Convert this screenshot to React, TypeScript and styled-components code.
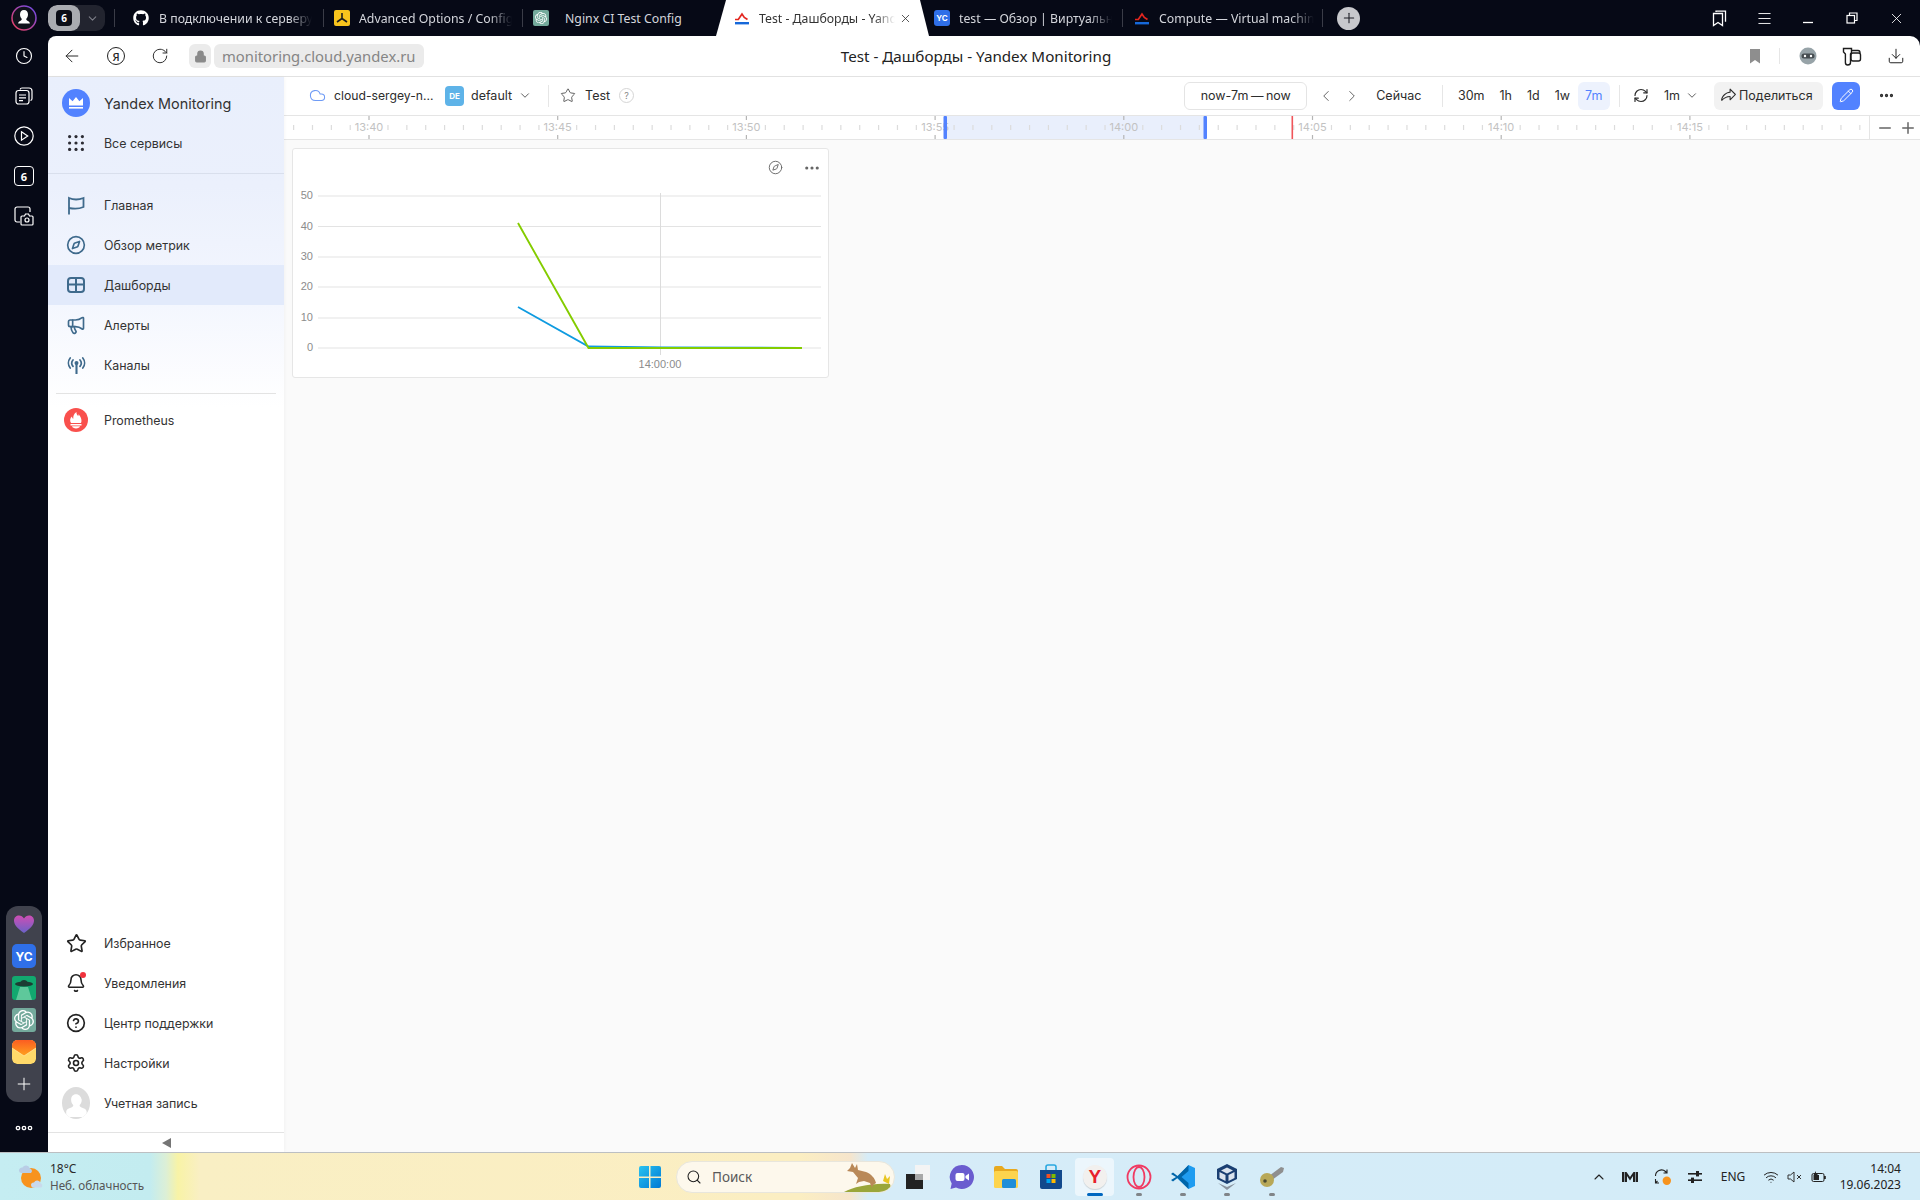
import React from "react";
import styled, { createGlobalStyle } from "styled-components";
import {
  ArrowLeft, RotateCw, Lock, ChevronDown, ChevronLeft, ChevronRight, ChevronUp, Star, Cloud, Compass, Megaphone,
  Bell, CircleHelp, Settings, MoreHorizontal, RefreshCw, Pencil, Minus, Plus, Search, Wifi, Clock, Download, X,
  Menu,
} from "lucide-react";
import { FaGithub } from "react-icons/fa";
import { SiOpenai } from "react-icons/si";
import { PiShareFat } from "react-icons/pi";

const UI = `Inter, "Noto Sans", sans-serif`;
const CHROME = `"Noto Sans", "Open Sans", sans-serif`;

const GlobalStyle = createGlobalStyle`
  html, body { margin: 0; padding: 0; background: #060916; }
  #root { width: 1920px; height: 1200px; overflow: hidden; }
  * { box-sizing: border-box; }
`;

const Page = styled.div`
  width: 1920px; height: 1200px; display: flex; flex-direction: column; background: #060916; overflow: hidden;
`;

/* ---------- browser tab strip ---------- */
const TabStrip = styled.div`
  flex: none; height: 36px; display: flex; align-items: center; color: #d4d6dc;
  font: 12.3px ${CHROME};
`;
const ProfileSlot = styled.div`
  flex: none; width: 48px; height: 36px; display: flex; align-items: center; justify-content: center;
`;
const Counter = styled.div`
  flex: none; width: 57px; height: 26px; display: flex; border-radius: 9px; background: #22242f; overflow: hidden;
`;
const CounterNum = styled.div`
  width: 32px; background: #a9abb0; border-radius: 9px; display: flex; align-items: center; justify-content: center;
`;
const CounterBadge = styled.div`
  width: 16px; height: 16px; border-radius: 4px; background: #0b0d16; color: #fff; font: 700 10px ${CHROME};
  display: flex; align-items: center; justify-content: center;
`;
const CounterArrow = styled.div`
  flex: 1; display: flex; align-items: center; justify-content: center; color: #7d7f88;
`;
const TabSep = styled.div<{ $ml?: number }>`
  flex: none; width: 1px; height: 18px; background: #3a3c47; margin-left: ${(p) => p.$ml ?? 0}px;
`;
const Tab = styled.div<{ $w: number; $pad: number; $gap: number }>`
  flex: none; width: ${(p) => p.$w}px; height: 36px; padding-left: ${(p) => p.$pad}px; display: flex; align-items: center;
  gap: ${(p) => p.$gap}px; white-space: nowrap;
`;
const ActiveTab = styled(Tab)`
  background: #fff; color: #333; clip-path: polygon(10px 0, 204px 0, 213px 100%, 0 100%);
`;
const TabText = styled.span<{ $w: number; $fade?: boolean }>`
  display: block; width: ${(p) => p.$w}px; overflow: hidden; flex: none; line-height: 18px; margin-top: 1px;
  ${(p) => (p.$fade ? "mask-image: linear-gradient(90deg, #000 85%, transparent 100%);" : "")}
`;
const TabClose = styled.span`
  display: flex; margin-left: -5px; color: #333;
`;
const NewTab = styled.div`
  flex: none; width: 23px; height: 23px; margin-left: 14px; border-radius: 50%; background: #c7c8cc; color: #1c1d25;
  display: flex; align-items: center; justify-content: center;
`;
const WindowControls = styled.div`
  margin-left: auto; padding-right: 2px; display: flex; color: #fff;
`;
const WinBtn = styled.div`
  width: 44px; height: 36px; display: flex; align-items: center; justify-content: center;
`;
const TabSquare = styled.div<{ $bg: string; $r?: number }>`
  width: 16px; height: 16px; flex: none; background: ${(p) => p.$bg}; border-radius: ${(p) => p.$r ?? 2}px; color: #fff;
  display: flex; align-items: center; justify-content: center; font: 700 8px ${UI};
`;

/* ---------- frame ---------- */
const Frame = styled.div`
  flex: 1; min-height: 0; display: flex;
`;
const Rail = styled.div`
  flex: none; width: 48px; display: flex; flex-direction: column; align-items: center; color: #fff; padding-bottom: 8px;
`;
const RailBtn = styled.div`
  width: 48px; height: 40px; flex: none; display: flex; align-items: center; justify-content: center;
`;
const RailSix = styled.div`
  width: 20px; height: 20px; border: 1.3px solid #fff; border-radius: 4px; font: 700 11px ${CHROME};
  display: flex; align-items: center; justify-content: center;
`;
const Dock = styled.div`
  margin-top: auto; width: 36px; height: 196px; background: #40424d; border-radius: 12px; display: flex; flex-direction: column;
  align-items: center; padding-top: 6px; gap: 8px;
`;
const DockItem = styled.div<{ $bg?: string; $r?: number }>`
  width: 24px; height: 24px; flex: none; background: ${(p) => p.$bg ?? "transparent"}; border-radius: ${(p) => p.$r ?? 3}px; display: flex;
  align-items: center; justify-content: center; color: #fff; font: 700 12px ${UI}; overflow: hidden;
`;
const DockMore = styled.div`
  margin-top: 10px; height: 32px; display: flex; align-items: center; justify-content: center;
`;

const Browser = styled.div`
  flex: 1; min-width: 0; background: #fff; border-radius: 8px 10px 0 0; display: flex; flex-direction: column; overflow: hidden;
`;
const AddressBar = styled.div`
  flex: none; height: 41px; padding-left: 2px; display: flex; align-items: center; border-bottom: 1px solid #e2e2e2; color: #2b2b2b;
`;
const NavBtn = styled.div`
  width: 44px; height: 40px; flex: none; display: flex; align-items: center; justify-content: center;
`;
const YaCircle = styled.div`
  width: 18px; height: 18px; border: 1.3px solid #222; border-radius: 50%; font: 500 11px ${CHROME}; color: #222;
  display: flex; align-items: center; justify-content: center;
`;
const LockBox = styled.div`
  flex: none; width: 22px; height: 24px; margin-left: 7px; border-radius: 6px; background: #ebebeb; color: #8a8a8a;
  display: flex; align-items: center; justify-content: center;
`;
const UrlPill = styled.div`
  flex: none; width: 210px; height: 24px; margin-left: 3px; border-radius: 6px; background: #ebebeb; color: #858585;
  font: 14.8px/24px ${CHROME}; padding-left: 8px; white-space: nowrap;
`;
const PageTitle = styled.div`
  flex: none; width: 1104px; text-align: center; font: 15.2px ${CHROME}; color: #222; white-space: nowrap;
`;
const AddressRight = styled.div`
  margin-left: auto; padding-right: 2px; display: flex; align-items: center;
`;
const BarSep = styled.div<{ $ml?: number; $mr?: number; $h?: number }>`
  flex: none; width: 1px; height: ${(p) => p.$h ?? 18}px; background: #e6e6e6;
  margin-left: ${(p) => p.$ml ?? 0}px; margin-right: ${(p) => p.$mr ?? 0}px;
`;

const AppRow = styled.div`
  flex: 1; min-height: 0; display: flex;
`;

/* ---------- sidebar ---------- */
const Sidebar = styled.aside`
  flex: none; width: 236px; display: flex; flex-direction: column; padding-top: 6px; font: 12.4px ${UI}; color: #333;
  background: linear-gradient(180deg, #e9effc 0, #ebf0fc 110px, #f3f6fe 220px, #fff 330px);
  box-shadow: 1px 0 3px rgba(0, 0, 0, 0.03);
  position: relative;
`;
const NavRow = styled.div<{ $active?: boolean; $big?: boolean; $c?: string }>`
  flex: none; height: 40px; padding-left: 14px; display: flex; align-items: center; gap: 14px;
  background: ${(p) => (p.$active ? "#e2eafb" : "transparent")};
  font-size: ${(p) => (p.$big ? 14.4 : 12.4)}px;
  > span:first-child { color: ${(p) => p.$c ?? "#3f6a8c"}; }
`;
const NavIcon = styled.span`
  flex: none; width: 28px; height: 28px; display: flex; align-items: center; justify-content: center; position: relative;
`;
const LogoCircle = styled.div`
  width: 28px; height: 28px; border-radius: 50%; background: #5282ff; display: flex; align-items: center; justify-content: center;
`;
const PromCircle = styled.div`
  width: 24px; height: 24px; border-radius: 50%; background: #f9504d; display: flex; align-items: center; justify-content: center;
`;
const Avatar = styled.div`
  width: 32px; height: 32px; border-radius: 50%; background: #dcdcdc; overflow: hidden; display: flex;
`;
const NotifyDot = styled.i`
  position: absolute; top: 3px; right: 4px; width: 6px; height: 6px; border-radius: 50%; background: #f0323c;
`;
const SideDivider = styled.div<{ $inset?: number; $mt: number; $mb: number; $c?: string }>`
  flex: none; height: 1px; background: ${(p) => p.$c ?? "#e3e3e3"}; margin: ${(p) => p.$mt}px ${(p) => p.$inset ?? 0}px ${(p) => p.$mb}px;
`;
const SideBottom = styled.div`
  margin-top: auto; display: flex; flex-direction: column;
`;
const Collapse = styled.div`
  height: 19px; display: flex; align-items: center; justify-content: center;
`;
const CollapseArrow = styled.i`
  display: block; margin-top: 1px; width: 0; height: 0; border-top: 5px solid transparent; border-bottom: 5px solid transparent; border-right: 9px solid #757575;
`;

/* ---------- dashboard ---------- */
const Workspace = styled.main`
  flex: 1; min-width: 0; display: flex; flex-direction: column; background: #fafafa; font: 12.5px ${UI}; color: #2d2d2d;
`;
const Toolbar = styled.div`
  flex: none; height: 39px; background: #fff; border-bottom: 1px solid #e5e5e5; padding: 0 22px 1px 25px; display: flex; align-items: center; white-space: nowrap;
`;
const Crumb = styled.span<{ $ml?: number; $w?: number }>`
  flex: none; margin-left: ${(p) => p.$ml ?? 0}px; display: flex; align-items: center;
  ${(p) => (p.$w ? `width: ${p.$w}px; font-size: 12.2px;` : "")}
`;
const FolderBadge = styled.div`
  flex: none; margin-left: 13px; width: 19px; height: 20px; border-radius: 4px; background: #5eb3e8; color: #fff; font: 700 8px ${UI};
  display: flex; align-items: center; justify-content: center;
`;
const HelpDot = styled.div`
  flex: none; margin-left: 9px; width: 15px; height: 15px; border: 1px solid #d5d5d5; border-radius: 50%; color: #888; font: 9px ${UI};
  display: flex; align-items: center; justify-content: center;
`;
const ToolbarRight = styled.div`
  margin-left: auto; display: flex; align-items: center;
`;
const NowBox = styled.div`
  flex: none; width: 123px; height: 28px; border: 1px solid #e4e4e4; border-radius: 6px; display: flex; align-items: center; justify-content: center;
  word-spacing: -1px;
`;
const RangeBtn = styled.div<{ $on?: boolean; $ml?: number }>`
  flex: none; height: 28px; padding: 0 7.5px; border-radius: 6px; display: flex; align-items: center; margin-left: ${(p) => p.$ml ?? 0}px;
  background: ${(p) => (p.$on ? "#edf2fd" : "transparent")}; color: ${(p) => (p.$on ? "#5282ff" : "inherit")};
`;
const ShareBtn = styled.div`
  flex: none; margin-left: 15px; width: 109px; height: 28px; border-radius: 6px; background: #f2f2f2; padding-left: 6px; display: flex; align-items: center; gap: 2px;
`;
const EditBtn = styled.div`
  flex: none; margin-left: 9px; width: 28px; height: 28px; border-radius: 6px; background: #5282ff; color: #fff; display: flex; align-items: center; justify-content: center;
`;
const ToolSlot = styled.div<{ $ml?: number; $w?: number }>`
  flex: none; width: ${(p) => p.$w ?? 16}px; margin-left: ${(p) => p.$ml ?? 0}px; display: flex; align-items: center; justify-content: center;
`;
const Timeline = styled.div`
  flex: none; height: 24px; background: #fff; border-bottom: 1px solid #e5e5e5; display: flex;
`;
const RulerSvg = styled.svg`
  flex: 1; display: block; height: 23px; min-width: 0; font-family: ${UI};
`;
const ZoomBox = styled.div`
  flex: none; width: 51px; border-left: 1px solid #e5e5e5; display: flex; align-items: center; gap: 5px; color: #666; padding-left: 6px;
`;
const Canvas = styled.div`
  flex: 1; padding: 8px; background: #fafafa;
`;
const Card = styled.section`
  width: 537px; height: 230px; background: #fff; border: 1px solid #e6e6e6; border-radius: 3px; display: flex; flex-direction: column;
`;
const CardHead = styled.div`
  flex: none; height: 37px; display: flex; justify-content: flex-end; align-items: center; padding: 0 7px 0 0; gap: 20px; color: #666;
`;
const ChartSvg = styled.svg`
  display: block; width: 535px; height: 190px; font-family: "Liberation Sans", Arial, sans-serif;
`;

/* ---------- taskbar ---------- */
const Taskbar = styled.footer`
  flex: none; height: 48px; border-top: 1px solid #bcbfc2; display: flex; align-items: center;
  background: linear-gradient(90deg, #c5edf2 0, #c3ecf0 150px, #dcefd6 166px, #f8f3a6 178px, #f9efc4 200px, #fbeec2 800px, #f6e5cc 850px, #d6ecf8 868px, #d3ecf8 1920px);
  font: 12px ${CHROME}; color: #2a2a2a;
`;
const Weather = styled.div`
  flex: none; width: 638px; padding-left: 18px; display: flex; align-items: center; gap: 6px; line-height: 16px;
`;
const WeatherText = styled.div`
  display: flex; flex-direction: column;
  small { font-size: 11.7px; color: #555; }
`;
const SearchPill = styled.div`
  flex: none; margin-left: 14px; width: 219px; height: 32px; border-radius: 16px; background: #fdf8ec; border: 1px solid #e8e6dc;
  display: flex; align-items: center; padding-left: 9px; gap: 10px; color: #5a5a5a; font-size: 13.5px; overflow: hidden;
`;
const SearchArt = styled.svg`
  margin-left: auto; flex: none; display: block;
`;
const TaskIcons = styled.div`
  flex: none; margin-left: 1px; display: flex; align-items: center;
`;
const TaskSlot = styled.div<{ $active?: boolean; $dot?: boolean }>`
  flex: none; width: 44.2px; height: 38px; position: relative; display: flex; align-items: center; justify-content: center;
  &::before {
    content: ""; position: absolute; inset: 0 2.5px; border-radius: 4px;
    background: ${(p) => (p.$active ? "rgba(255,255,255,.55)" : "transparent")};
  }
  &::after {
    content: ""; position: absolute; left: 50%; bottom: 0; transform: translateX(-50%); height: 3px; border-radius: 2px;
    width: ${(p) => (p.$active ? 16 : 6)}px;
    background: ${(p) => (p.$active ? "#0067c0" : p.$dot ? "#808488" : "transparent")};
  }
  > * { position: relative; z-index: 1; }
`;
const YandexBall = styled.div`
  width: 24px; height: 24px; border-radius: 50%; background: #f2f0ee; box-shadow: 0 1px 1px rgba(0,0,0,.15); color: #e8212b;
  font: 700 19px/24px "Liberation Sans", sans-serif; text-align: center;
`;
const Tray = styled.div`
  margin-left: auto; padding-right: 19px; display: flex; align-items: center; color: #222;
`;
const TraySlot = styled.div<{ $w: number }>`
  flex: none; width: ${(p) => p.$w}px; display: flex; align-items: center; justify-content: center;
`;
const ClockBox = styled.div`
  flex: none; width: 70px; text-align: right; line-height: 16px; font-size: 12px; white-space: nowrap;
`;

/* ---------- drawn icons ---------- */
const YCloudLogo = () => (
  <svg width="16" height="16" viewBox="0 0 16 16">
    <path d="M1 9.500h3.300L8 4l2.300 3.400L13.500 9.500" fill="none" stroke="#e3261f" strokeWidth="1.700" />
    <rect x="1" y="12" width="14" height="2.400" fill="#1668d9" />
  </svg>
);
const CrownIcon = () => (
  <svg width="16" height="14" viewBox="0 0 16 14" fill="#fff">
    <path d="M1 2l3.600 3.300L8 1l3.400 4.300L15 2v7.600H1z" />
    <rect x="1" y="11" width="14" height="1.600" />
  </svg>
);
const DotGrid = () => (
  <svg width="16" height="16" viewBox="0 0 16 16" fill="#2c2c34">
    {[1.6, 8, 14.4].flatMap((y) => [1.6, 8, 14.4].map((x) => <circle key={`${x}${y}`} cx={x} cy={y} r="1.6" />))}
  </svg>
);
const FlagIcon = () => (
  <svg width="18" height="19" viewBox="0 0 18 19" fill="none" stroke="currentColor" strokeWidth="1.800">
    <path d="M2 18.500V2c4.500 2 9.500 2 14.500 0v9c-5 2.200-9.500 2-14.500 1" />
  </svg>
);
const DashIcon = () => (
  <svg width="18" height="16" viewBox="0 0 18 16" fill="none" stroke="currentColor" strokeWidth="2">
    <rect x="1" y="1" width="16" height="14" rx="3" />
    <path d="M1 7.500h16M9 1v14" />
  </svg>
);
const AntennaIcon = () => (
  <svg width="19" height="17" viewBox="0 0 19 17" fill="none" stroke="currentColor" strokeWidth="1.700" strokeLinecap="round">
    <circle cx="9.500" cy="6" r="2" fill="currentColor" stroke="none" />
    <path d="M9.500 7.500v9" strokeWidth="2.100" />
    <path d="M6 3a5 5 0 0 0 0 6.400M13 3a5 5 0 0 1 0 6.400M3.200 1a8 8 0 0 0 0 10M15.800 1a8 8 0 0 1 0 10" />
  </svg>
);
const PromFlame = () => (
  <svg width="16" height="18" viewBox="0 0 16 18" fill="#fff">
    <path d="M3 12C1.500 9.500 2 7 4 5.500c0 1.300.6 2 1.300 2.200C5 5 6 2.500 8.500 1c-.3 1.800.7 3 1.700 4 .3-.6.400-1.200.2-1.800C12.500 5 14.500 9 13 12z" />
    <rect x="2.500" y="13" width="11" height="1.500" />
    <path d="M4 15.300h8c-.4 1.300-2 2.200-4 2.200s-3.600-.9-4-2.200z" />
  </svg>
);
const PersonShape = () => (
  <svg width="32" height="32" viewBox="0 0 32 32" fill="#fff">
    <path d="M16 6c-3.700 0-5.600 2.800-5.600 6.300 0 2.400 1 4.600 2.400 6 .3 1.200-.4 2-1.600 2.600-3 1.200-6 2-6.400 5v6.100h23.400v-6.100c-.4-3-3.400-3.800-6.400-5-1.200-.6-1.900-1.400-1.600-2.600 1.400-1.400 2.400-3.600 2.400-6C21.600 8.800 19.700 6 16 6z" />
  </svg>
);
const ProfileIcon = () => (
  <svg width="26" height="26" viewBox="0 0 26 26">
    <defs>
      <linearGradient id="pr" x1="0" y1="1" x2="1" y2="0">
        <stop offset="0" stopColor="#f0405a" />
        <stop offset="1" stopColor="#6a4bf0" />
      </linearGradient>
    </defs>
    <circle cx="13" cy="13" r="12" fill="#10121c" stroke="url(#pr)" strokeWidth="1.500" />
    <path d="M13 5c-2.600 0-4 2-4 4.500 0 1.700.8 3.300 1.700 4.300.2.900-.3 1.500-1.100 1.900-1.300.7-2.300 1.200-2.500 2.800h11.800c-.2-1.600-1.200-2.100-2.500-2.800-.8-.4-1.300-1-1.100-1.900.9-1 1.700-2.600 1.700-4.300C17 7 15.600 5 13 5z" fill="#fff" />
  </svg>
);
const YTabLogo = () => (
  <TabSquare $bg="#f8c41d">
    <svg width="12" height="12" viewBox="0 0 12 12" fill="none" stroke="#1d1d1d" strokeWidth="1.600">
      <path d="M6 1v5.500L1 10M6 6.500L11 10" />
    </svg>
  </TabSquare>
);
const CopyMarks = () => (
  <svg width="18" height="18" viewBox="0 0 18 18" fill="none" stroke="#fff" strokeWidth="1.300">
    <path d="M5 3V2.200h9.500v10.600" />
    <path d="M2.500 4.500h9v12l-4.500-3-4.500 3z" />
  </svg>
);
const MinimizeIcon = () => (
  <svg width="12" height="12" viewBox="0 0 12 12"><path d="M1 10.500h10" stroke="#fff" strokeWidth="1.300" /></svg>
);
const RestoreIcon = () => (
  <svg width="12" height="12" viewBox="0 0 12 12" fill="none" stroke="#fff" strokeWidth="1.200">
    <rect x="1" y="3.500" width="7.500" height="7.500" />
    <path d="M3.500 3.500V1H11v7.500H8.500" />
  </svg>
);
const RobotIcon = () => (
  <svg width="18" height="18" viewBox="0 0 18 18">
    <circle cx="9" cy="9" r="8.500" fill="#97a3a8" />
    <rect x="2.500" y="6.500" width="13" height="5" rx="2.500" fill="#454c50" />
    <circle cx="6" cy="9" r="1.200" fill="#fff" />
    <circle cx="12" cy="9" r="1.200" fill="#fff" />
  </svg>
);
const KeyLockIcon = () => (
  <svg width="20" height="20" viewBox="0 0 20 20" fill="none" stroke="#1d1d1d" strokeWidth="1.400">
    <path d="M1.500 2.500h8v4l-1 1.500v8.500c0 1.600-1 2.500-2.800 2.500-1.500 0-2.300-1-2.300-2.500V8l-1.900-2z" />
    <rect x="9" y="7" width="9.500" height="8" rx="2" />
    <path d="M10 4.500h6c1.200 0 2 1 2 2.500" />
  </svg>
);
const BookmarkSolid = () => (
  <svg width="12" height="15" viewBox="0 0 12 15"><path d="M1 0h10v14.500L6 11l-5 3.500z" fill="#8e8e8e" /></svg>
);
const HeartIcon = () => (
  <svg width="22" height="20" viewBox="0 0 22 20">
    <defs>
      <linearGradient id="hg" x1="0" y1="0" x2="0" y2="1">
        <stop offset="0" stopColor="#ce4eb4" />
        <stop offset="1" stopColor="#6a62c8" />
      </linearGradient>
    </defs>
    <path d="M11 19C4 14 1 10.500 1 6.500 1 3.500 3.300 1.500 6 1.500c2 0 3.800 1 5 3 1.200-2 3-3 5-3 2.700 0 5 2 5 5 0 4-3 7.500-10 12.500z" fill="url(#hg)" />
  </svg>
);
const UfoIcon = () => (
  <svg width="24" height="24" viewBox="0 0 24 24">
    <rect width="24" height="24" fill="#12a86f" />
    <path d="M8 11h8l4 13H4z" fill="#7fd6ae" opacity=".7" />
    <ellipse cx="12" cy="8" rx="9" ry="2.400" fill="#1c3d33" />
    <path d="M8.500 7c0-2 1.500-3 3.500-3s3.500 1 3.500 3z" fill="#1c3d33" />
  </svg>
);
const MailIcon = () => (
  <svg width="24" height="24" viewBox="0 0 24 24">
    <defs>
      <linearGradient id="mf" x1="0" y1="0" x2="0" y2="1">
        <stop offset="0" stopColor="#fb5d22" />
        <stop offset="1" stopColor="#ffa21e" />
      </linearGradient>
    </defs>
    <rect width="24" height="24" rx="5" fill="#ffd96a" />
    <path d="M0 5a5 5 0 0 1 5-5h14a5 5 0 0 1 5 5v3l-12 8L0 8z" fill="url(#mf)" />
    <path d="M0 8l12 8 12-8" fill="none" stroke="#ffe9a0" strokeWidth=".8" />
  </svg>
);
const RailCards = () => (
  <svg width="18" height="18" viewBox="0 0 18 18" fill="none" stroke="#fff" strokeWidth="1.200">
    <rect x="1" y="3.500" width="13" height="13.500" rx="2.500" />
    <path d="M5 2.500c.3-1 1-1.500 2-1.500h7c2 0 3 1 3 3v7.500c0 1-.6 1.800-1.500 2" />
    <path d="M4 8h7M4 10.800h7M4 13.600h4" />
  </svg>
);
const RailCam = () => (
  <svg width="20" height="20" viewBox="0 0 20 20" fill="none" stroke="#fff" strokeWidth="1.200">
    <path d="M6 16H3a2 2 0 0 1-2-2V3a2 2 0 0 1 2-2h11a2 2 0 0 1 2 2v3" />
    <path d="M8 10h2.500l1-2h3l1 2H18a1 1 0 0 1 1 1v7a1 1 0 0 1-1 1H8a1 1 0 0 1-1-1v-7a1 1 0 0 1 1-1z" />
    <circle cx="13" cy="14" r="2" />
  </svg>
);
const RailOoo = () => (
  <svg width="18" height="6" viewBox="0 0 18 6" fill="none" stroke="#fff" strokeWidth="1.300">
    <circle cx="3" cy="3" r="1.700" />
    <circle cx="9" cy="3" r="1.700" />
    <circle cx="15" cy="3" r="1.700" />
  </svg>
);
const WeatherIcon = () => (
  <svg width="26" height="26" viewBox="0 0 26 26">
    <circle cx="13" cy="14" r="10" fill="#f7931e" />
    <path d="M1 6.500a3 3 0 0 1 3.500-3 4 4 0 0 1 7.200.8A2.700 2.700 0 0 1 13 9H3.200A2.400 2.400 0 0 1 1 6.500z" fill="#b9cde6" />
    <path d="M13 21a2.500 2.500 0 0 1 3-2.500 3.500 3.500 0 0 1 6.500.7 2.400 2.400 0 0 1 .8 4.300H15a2.500 2.500 0 0 1-2-2.500z" fill="#c9d9ec" />
  </svg>
);
const WinLogo = () => (
  <svg width="24" height="24" viewBox="0 0 24 24">
    <defs>
      <linearGradient id="wl" x1="0" y1="0" x2="1" y2="1">
        <stop offset="0" stopColor="#29c3f0" />
        <stop offset="1" stopColor="#0078d4" />
      </linearGradient>
    </defs>
    <path d="M1 3a2 2 0 0 1 2-2h8v10.500H1zM12.500 1H21a2 2 0 0 1 2 2v8.500H12.500zM1 13h10v10H3a2 2 0 0 1-2-2zM12.500 13H23v8a2 2 0 0 1-2 2h-8.500z" fill="url(#wl)" />
  </svg>
);
const HareArt = () => (
  <SearchArt width="50" height="30" viewBox="0 0 50 30">
    <path d="M0 30c10-5 26-9 46-8l2 8z" fill="#9aa63a" />
    <path d="M8 1l3 5 2-4 1 6 8 2c5 2 9 6 10 11l-3 2-1 3-2-5-6-2-5 1-3 2 2-6-5-6-6-1 3-3z" fill="#b98958" />
    <path d="M39 19l2-7 2 5 3-3-1 8z" fill="#e8c520" />
  </SearchArt>
);
const TaskView = () => (
  <svg width="26" height="26" viewBox="0 0 26 26">
    <rect x="10" y="1" width="15" height="15" fill="#f4f4f4" />
    <rect x="1" y="10" width="17" height="15" fill="#222" />
    <rect x="10" y="10" width="8" height="6" fill="#a8a8a8" />
  </svg>
);
const ChatIcon = () => (
  <svg width="26" height="26" viewBox="0 0 26 26">
    <path d="M13 1a12 12 0 1 1-6 22.400L1.500 25l1.200-5.500A12 12 0 0 1 13 1z" fill="#6a5ccf" />
    <rect x="6.500" y="9" width="9" height="8" rx="2" fill="#fff" />
    <path d="M16.500 12l3.500-2.500v7L16.500 14z" fill="#fff" />
  </svg>
);
const FolderIcon = () => (
  <svg width="26" height="24" viewBox="0 0 26 24">
    <path d="M1 3a2 2 0 0 1 2-2h6l3 3h11a2 2 0 0 1 2 2v3H1z" fill="#e8a91f" />
    <rect x="1" y="6" width="24" height="17" rx="1.500" fill="#fdd44d" />
    <rect x="9" y="14" width="14" height="9" rx="1.500" fill="#1f8ed8" />
  </svg>
);
const StoreIcon = () => (
  <svg width="24" height="26" viewBox="0 0 24 26">
    <path d="M7 7V3a2 2 0 0 1 2-2h6a2 2 0 0 1 2 2v4" fill="none" stroke="#2aa8e0" strokeWidth="1.600" />
    <path d="M1 6h22v17a2 2 0 0 1-2 2H3a2 2 0 0 1-2-2z" fill="#12498c" />
    <rect x="7.500" y="10" width="4" height="4" fill="#f25022" />
    <rect x="12.500" y="10" width="4" height="4" fill="#7fba00" />
    <rect x="7.500" y="15" width="4" height="4" fill="#00a4ef" />
    <rect x="12.500" y="15" width="4" height="4" fill="#ffb900" />
  </svg>
);
const OperaIcon = () => (
  <svg width="26" height="26" viewBox="0 0 26 26" fill="none" stroke="#f03a62" strokeWidth="1.800">
    <circle cx="13" cy="13" r="11.500" />
    <ellipse cx="13" cy="13" rx="5.500" ry="10" />
  </svg>
);
const VsCodeIcon = () => (
  <svg width="26" height="26" viewBox="0 0 26 26">
    <path d="M18.500 1L25 4v18l-6.500 3L7 14z" fill="#1f9cf0" />
    <path d="M18.500 1L7.500 12 3 8.500 1 10l5 3-5 3 2 1.500L7.500 14l11 11V19l-7-6 7-6z" fill="#0065a9" />
  </svg>
);
const VBoxIcon = () => (
  <svg width="24" height="28" viewBox="0 0 24 28">
    <path d="M12 1l10 5v10l-10 5-10-5V6z" fill="#1b3f72" />
    <path d="M12 4.500l6 3-6 3-6-3zM4.500 9l6 3v6l-6-3zM19.500 9l-6 3v6l6-3z" fill="#dce4ee" />
    <path d="M3 20l9 7 9-7-9 4z" fill="#8a949e" />
  </svg>
);
const KeyTaskIcon = () => (
  <svg width="26" height="24" viewBox="0 0 26 24">
    <path d="M10 11L22 2l3 1-1 4-11 8z" fill="#8f8f8f" />
    <circle cx="8" cy="15" r="7" fill="#b8a858" />
    <circle cx="6" cy="16" r="1.800" fill="#4a4a30" />
  </svg>
);
const TrayBars = () => (
  <svg width="16" height="12" viewBox="0 0 16 12" fill="#222">
    <rect x="0" y="1" width="2.400" height="10" />
    <rect x="13.600" y="1" width="2.400" height="10" />
    <path d="M3 1h1.500L8 6l3.500-5H13v10h-2V5L8 9.500 5 5v6H3z" />
  </svg>
);
const TraySync = () => (
  <svg width="18" height="18" viewBox="0 0 18 18" fill="none" stroke="#222" strokeWidth="1.100">
    <path d="M1.500 8a6 6 0 0 1 10-4.500L13 5M13 1.500V5H9.500" />
    <path d="M1.500 11v4h3.500M1.500 15l2-2" />
    <circle cx="12.800" cy="12.800" r="4.200" fill="#f7931e" stroke="none" />
  </svg>
);
const TraySliders = () => (
  <svg width="14" height="12" viewBox="0 0 14 12" fill="#222">
    <rect y="2" width="14" height="1.600" />
    <rect x="8" y="0" width="3" height="5.400" />
    <rect y="8.400" width="14" height="1.600" />
    <rect x="3" y="6.600" width="3" height="5.400" />
  </svg>
);
const TrayVolume = () => (
  <svg width="16" height="12" viewBox="0 0 16 12" fill="none" stroke="#333" strokeWidth="1">
    <path d="M1 4h2.500L7 1v10L3.500 8H1zM10 4l4 4M14 4l-4 4" />
  </svg>
);
const TrayBattery = () => (
  <svg width="16" height="12" viewBox="0 0 16 12">
    <rect x="1" y="2.500" width="12" height="8" rx="1.500" fill="none" stroke="#222" strokeWidth="1" />
    <rect x="13" y="5" width="1.800" height="3" fill="#222" />
    <rect x="2.500" y="4" width="5.500" height="5" fill="#222" />
    <path d="M5 0L2.500 4h2L3.500 7 7 3H5z" fill="#222" />
  </svg>
);

/* ---------- data ---------- */
const sideTop = [
  { label: "Главная", icon: <FlagIcon /> },
  { label: "Обзор метрик", icon: <Compass size={20} strokeWidth={2} /> },
  { label: "Дашборды", icon: <DashIcon />, active: true },
  { label: "Алерты", icon: <Megaphone size={20} strokeWidth={2} /> },
  { label: "Каналы", icon: <AntennaIcon /> },
];
const sideBottom = [
  { label: "Избранное", icon: <Star size={21} strokeWidth={1.9} /> },
  {
    label: "Уведомления",
    icon: (
      <>
        <Bell size={20} strokeWidth={1.9} />
        <NotifyDot />
      </>
    ),
  },
  { label: "Центр поддержки", icon: <CircleHelp size={20} strokeWidth={2} /> },
  { label: "Настройки", icon: <Settings size={20} strokeWidth={1.9} /> },
];
const ranges = ["30m", "1h", "1d", "1w", "7m"];

const MAJOR_STEP = 188.7;
const rulerLabels = ["13:40", "13:45", "13:50", "13:55", "14:00", "14:05", "14:10", "14:15"];
const rulerTicks: number[] = [];
for (let i = -4; i < 80; i++) {
  if (i % 10 !== 0) rulerTicks.push(369 + (i * MAJOR_STEP) / 10);
}
const yTicks: [string, number][] = [
  ["50", 196], ["40", 226.5], ["30", 257], ["20", 287], ["10", 318], ["0", 348],
];

const Ruler = () => (
  <RulerSvg viewBox="284 116 1585 23" preserveAspectRatio="none">
    <rect x="945" y="116" width="260" height="23" fill="#e9effc" />
    {rulerTicks.filter((x) => x < 1865).map((x) => (
      <rect key={x} x={x - 0.5} y="125" width="1.200" height="5" fill="#dcdcdc" />
    ))}
    {rulerLabels.map((t, i) => {
      const x = 369 + i * MAJOR_STEP;
      return (
        <g key={t}>
          <rect x={x - 0.6} y="116" width="1.200" height="4" fill="#b5b5b5" />
          <rect x={x - 0.6} y="135" width="1.200" height="4" fill="#b5b5b5" />
          <text x={x} y="131" fontSize="11" fill="#c2c2c2" textAnchor="middle">{t}</text>
        </g>
      );
    })}
    <rect x="943.500" y="116" width="3.500" height="23" rx="1" fill="#5282ff" />
    <rect x="1203.500" y="116" width="3.500" height="23" rx="1" fill="#5282ff" />
    <rect x="1291.500" y="116" width="1.600" height="23" fill="#f0555a" />
  </RulerSvg>
);

const Chart = () => (
  <ChartSvg viewBox="293 186 535 190">
    {yTicks.map(([t, y]) => (
      <g key={t}>
        <line x1="318" x2="821" y1={y} y2={y} stroke="#e3e3e3" />
        <text x="313" y={y + 3} fontSize="11" fill="#8c8c8c" textAnchor="end">{t}</text>
      </g>
    ))}
    <line x1="660.500" x2="660.500" y1="193" y2="355" stroke="#dcdcdc" />
    <text x="660" y="368" fontSize="11" fill="#8c8c8c" textAnchor="middle">14:00:00</text>
    <polyline points="518,307 588.500,346.500 660,347.500 800,347.800" fill="none" stroke="#0f9be0" strokeWidth="1.800" />
    <polyline points="518,223 588.500,348 802,348" fill="none" stroke="#84cc00" strokeWidth="1.900" />
  </ChartSvg>
);

export default function App() {
  return (
    <Page>
      <GlobalStyle />
      <TabStrip>
        <ProfileSlot><ProfileIcon /></ProfileSlot>
        <Counter>
          <CounterNum><CounterBadge>6</CounterBadge></CounterNum>
          <CounterArrow><ChevronDown size={13} /></CounterArrow>
        </Counter>
        <TabSep $ml={9} />
        <Tab $w={208} $pad={18} $gap={10}>
          <FaGithub size={16} color="#fff" />
          <TabText $w={153} $fade>В подключении к серверу</TabText>
        </Tab>
        <TabSep />
        <Tab $w={198} $pad={10} $gap={9}>
          <YTabLogo />
          <TabText $w={153} $fade>Advanced Options / Configuration</TabText>
        </Tab>
        <TabSep />
        <Tab $w={193} $pad={10} $gap={16}>
          <TabSquare $bg="#74aa9c"><SiOpenai size={12} /></TabSquare>
          <TabText $w={140}>Nginx CI Test Config</TabText>
        </Tab>
        <ActiveTab $w={213} $pad={18} $gap={9}>
          <YCloudLogo />
          <TabText $w={136} $fade>Test - Дашборды - Yandex Monitoring</TabText>
          <TabClose><X size={13} strokeWidth={1.5} /></TabClose>
        </ActiveTab>
        <Tab $w={193} $pad={5} $gap={9}>
          <TabSquare $bg="#2f6fe8" $r={3}>YC</TabSquare>
          <TabText $w={153} $fade>test — Обзор | Виртуальные машины</TabText>
        </Tab>
        <TabSep />
        <Tab $w={199} $pad={11} $gap={9}>
          <YCloudLogo />
          <TabText $w={155} $fade>Compute — Virtual machines</TabText>
        </Tab>
        <TabSep />
        <NewTab><Plus size={16} strokeWidth={1.6} /></NewTab>
        <WindowControls>
          <WinBtn><CopyMarks /></WinBtn>
          <WinBtn><Menu size={17} strokeWidth={1.3} /></WinBtn>
          <WinBtn><MinimizeIcon /></WinBtn>
          <WinBtn><RestoreIcon /></WinBtn>
          <WinBtn><X size={17} strokeWidth={1.2} /></WinBtn>
        </WindowControls>
      </TabStrip>

      <Frame>
        <Rail>
          <RailBtn><Clock size={18} strokeWidth={1.5} /></RailBtn>
          <RailBtn><RailCards /></RailBtn>
          <RailBtn>
            <svg width="20" height="20" viewBox="0 0 20 20" fill="none" stroke="#fff" strokeWidth="1.200">
              <circle cx="10" cy="10" r="9.200" />
              <path d="M7.500 5.800l6.200 4.200-6.200 4.200z" />
            </svg>
          </RailBtn>
          <RailBtn><RailSix>6</RailSix></RailBtn>
          <RailBtn><RailCam /></RailBtn>
          <Dock>
            <DockItem><HeartIcon /></DockItem>
            <DockItem $bg="#2f6fe8" $r={5}>YC</DockItem>
            <DockItem><UfoIcon /></DockItem>
            <DockItem $bg="#74aa9c"><SiOpenai size={20} /></DockItem>
            <DockItem $r={5}><MailIcon /></DockItem>
            <DockItem><Plus size={20} strokeWidth={1.2} /></DockItem>
          </Dock>
          <DockMore><RailOoo /></DockMore>
        </Rail>

        <Browser>
          <AddressBar>
            <NavBtn><ArrowLeft size={20} strokeWidth={1.2} /></NavBtn>
            <NavBtn><YaCircle>Я</YaCircle></NavBtn>
            <NavBtn><RotateCw size={18} strokeWidth={1.3} /></NavBtn>
            <LockBox><Lock size={13} fill="#8a8a8a" strokeWidth={2} /></LockBox>
            <UrlPill>monitoring.cloud.yandex.ru</UrlPill>
            <PageTitle>Test - Дашборды - Yandex Monitoring</PageTitle>
            <AddressRight>
              <NavBtn><BookmarkSolid /></NavBtn>
              <BarSep $h={16} $ml={2} $mr={6} />
              <NavBtn><RobotIcon /></NavBtn>
              <NavBtn><KeyLockIcon /></NavBtn>
              <NavBtn><Download size={18} strokeWidth={1.3} color="#1d1d1d" /></NavBtn>
            </AddressRight>
          </AddressBar>

          <AppRow>
            <Sidebar>
              <NavRow $big>
                <NavIcon><LogoCircle><CrownIcon /></LogoCircle></NavIcon>
                <span>Yandex Monitoring</span>
              </NavRow>
              <NavRow>
                <NavIcon><DotGrid /></NavIcon>
                <span>Все сервисы</span>
              </NavRow>
              <SideDivider $mt={10} $mb={11} $c="#d9dfec" />
              {sideTop.map((r) => (
                <NavRow key={r.label} $active={r.active}>
                  <NavIcon>{r.icon}</NavIcon>
                  <span>{r.label}</span>
                </NavRow>
              ))}
              <SideDivider $inset={8} $mt={8} $mb={6} />
              <NavRow>
                <NavIcon><PromCircle><PromFlame /></PromCircle></NavIcon>
                <span>Prometheus</span>
              </NavRow>
              <SideBottom>
                {sideBottom.map((r) => (
                  <NavRow key={r.label} $c="#222">
                    <NavIcon>{r.icon}</NavIcon>
                    <span>{r.label}</span>
                  </NavRow>
                ))}
                <NavRow>
                  <NavIcon><Avatar><PersonShape /></Avatar></NavIcon>
                  <span>Учетная запись</span>
                </NavRow>
                <SideDivider $mt={9} $mb={0} />
                <Collapse><CollapseArrow /></Collapse>
              </SideBottom>
            </Sidebar>

            <Workspace>
              <Toolbar>
                <Cloud size={17} color="#6f9bf5" strokeWidth={1.5} />
                <Crumb $ml={8} $w={98}>cloud-sergey-n...</Crumb>
                <FolderBadge>DE</FolderBadge>
                <Crumb $ml={7}>default</Crumb>
                <ToolSlot $ml={6} $w={14}><ChevronDown size={19} strokeWidth={1.3} /></ToolSlot>
                <BarSep $ml={16} $h={22} />
                <ToolSlot $ml={11}><Star size={17} strokeWidth={1.4} color="#555" /></ToolSlot>
                <Crumb $ml={9}>Test</Crumb>
                <HelpDot>?</HelpDot>
                <ToolbarRight>
                  <NowBox>now-7m — now</NowBox>
                  <ToolSlot $ml={9} $w={20}><ChevronLeft size={18} strokeWidth={1.2} color="#555" /></ToolSlot>
                  <ToolSlot $ml={6} $w={20}><ChevronRight size={18} strokeWidth={1.2} color="#555" /></ToolSlot>
                  <Crumb $ml={14}>Сейчас</Crumb>
                  <BarSep $ml={21} $h={22} />
                  {ranges.map((r, i) => (
                    <RangeBtn key={r} $on={r === "7m"} $ml={i === 0 ? 7 : 0}>{r}</RangeBtn>
                  ))}
                  <BarSep $ml={9} $h={22} />
                  <ToolSlot $ml={13}><RefreshCw size={17} strokeWidth={1.8} /></ToolSlot>
                  <Crumb $ml={15}>1m</Crumb>
                  <ToolSlot $ml={5} $w={14}><ChevronDown size={19} strokeWidth={1.3} /></ToolSlot>
                  <ShareBtn><PiShareFat size={17} />Поделиться</ShareBtn>
                  <EditBtn><Pencil size={15} strokeWidth={1.6} /></EditBtn>
                  <ToolSlot $ml={14} $w={24}><MoreHorizontal size={17} strokeWidth={2.6} /></ToolSlot>
                </ToolbarRight>
              </Toolbar>
              <Timeline>
                <Ruler />
                <ZoomBox>
                  <Minus size={18} strokeWidth={2} />
                  <Plus size={18} strokeWidth={2} />
                </ZoomBox>
              </Timeline>
              <Canvas>
                <Card>
                  <CardHead>
                    <Compass size={15} strokeWidth={1.5} />
                    <MoreHorizontal size={18} strokeWidth={2.2} />
                  </CardHead>
                  <Chart />
                </Card>
              </Canvas>
            </Workspace>
          </AppRow>
        </Browser>
      </Frame>

      <Taskbar>
        <Weather>
          <WeatherIcon />
          <WeatherText>
            <span>18°C</span>
            <small>Неб. облачность</small>
          </WeatherText>
        </Weather>
        <WinLogo />
        <SearchPill>
          <Search size={16} strokeWidth={1.6} color="#222" />
          Поиск
          <HareArt />
        </SearchPill>
        <TaskIcons>
          <TaskSlot><TaskView /></TaskSlot>
          <TaskSlot><ChatIcon /></TaskSlot>
          <TaskSlot><FolderIcon /></TaskSlot>
          <TaskSlot><StoreIcon /></TaskSlot>
          <TaskSlot $active><YandexBall>Y</YandexBall></TaskSlot>
          <TaskSlot $dot><OperaIcon /></TaskSlot>
          <TaskSlot $dot><VsCodeIcon /></TaskSlot>
          <TaskSlot $dot><VBoxIcon /></TaskSlot>
          <TaskSlot $dot><KeyTaskIcon /></TaskSlot>
        </TaskIcons>
        <Tray>
          <TraySlot $w={30}><ChevronUp size={16} strokeWidth={1.6} /></TraySlot>
          <TraySlot $w={32}><TrayBars /></TraySlot>
          <TraySlot $w={33}><TraySync /></TraySlot>
          <TraySlot $w={32}><TraySliders /></TraySlot>
          <TraySlot $w={44}>ENG</TraySlot>
          <TraySlot $w={4} />
          <TraySlot $w={24}><Wifi size={16} strokeWidth={1.5} /></TraySlot>
          <TraySlot $w={24}><TrayVolume /></TraySlot>
          <TraySlot $w={24}><TrayBattery /></TraySlot>
          <ClockBox>
            14:04<br />19.06.2023
          </ClockBox>
        </Tray>
      </Taskbar>
    </Page>
  );
}
